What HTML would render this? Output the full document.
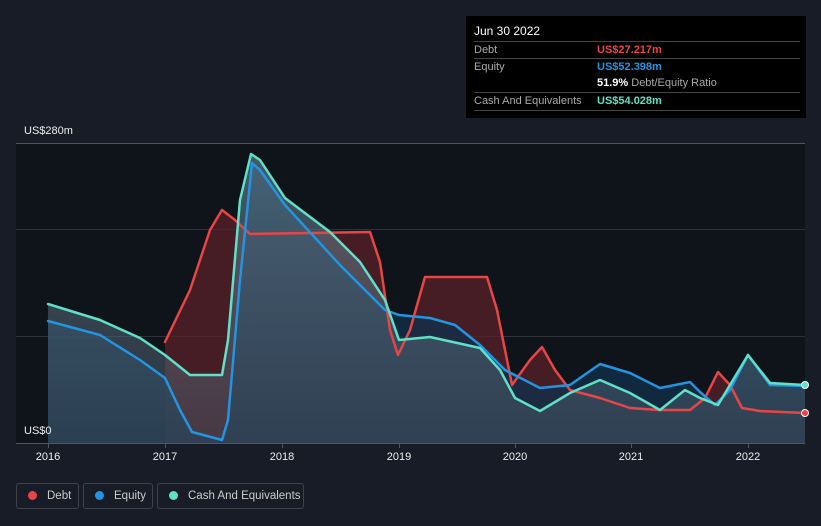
<!DOCTYPE html>
<html><head><style>
body{margin:0;width:821px;height:526px;background:#171c26;font-family:"Liberation Sans",sans-serif;overflow:hidden;position:relative}
.tt{position:absolute;left:466px;top:16px;width:340px;height:102px;background:#000;color:#fff;font-size:11px}
.row{position:absolute;left:8px;width:326px;border-top:1px solid #444;height:17px;line-height:17px}
.lbl{color:#aaa}
.v{position:absolute;left:123px;top:0;font-weight:bold}
.leg{position:absolute;top:483px;height:26px;border:1px solid #3d434d;border-radius:3px;color:#ccc;font-size:11.5px;line-height:24px;box-sizing:border-box;white-space:nowrap}
.dot{display:inline-block;width:9px;height:9px;border-radius:50%;margin:0 10px 0 11px;vertical-align:-1px}
.ax{position:absolute;color:#eee;font-size:11px;width:40px;text-align:center}
</style></head><body>
<svg width="821" height="526" style="position:absolute;left:0;top:0">
<defs>
<linearGradient id="cf" x1="0" x2="0" y1="0" y2="1"><stop offset="0" stop-color="#6a8a99" stop-opacity=".6"/><stop offset="1" stop-color="#4a5a6a" stop-opacity=".45"/></linearGradient>
</defs>
<rect x="16" y="143" width="789" height="300" fill="#0f131a"/>
<g stroke="#2c313a" stroke-width="1"><line x1="16" y1="143.5" x2="805" y2="143.5" stroke="#555"/><line x1="16" y1="229.5" x2="805" y2="229.5"/><line x1="16" y1="336.5" x2="805" y2="336.5"/></g>
<path d="M165,342 L190,290 L210,230 L222,210 L235,220 L250,234 L370,232 L380,262 L390,330 L398,355 L410,330 L425,277 L487,277 L497,310 L512,385 L530,360 L542,347 L555,370 L570,390 L600,398 L630,408 L660,410 L690,410 L705,398 L718,372 L730,385 L742,408 L760,411 L805,413 L805,443 L165,443Z" fill="#5a2228" fill-opacity=".75"/>
<path d="M48,321 L100,335 L140,360 L165,378 L180,410 L192,432 L222,440 L228,420 L240,280 L252,163 L260,170 L285,205 L340,265 L385,310 L399,315 L430,318 L455,325 L480,345 L505,370 L540,388 L570,385 L600,364 L630,373 L660,388 L690,382 L700,392 L715,405 L730,390 L748,355 L770,385 L805,386 L805,443 L48,443Z" fill="#123049" fill-opacity=".8"/>
<path d="M48,304 L100,320 L140,338 L165,355 L190,375 L222,375 L228,340 L240,200 L251,154 L260,160 L285,198 L330,232 L360,262 L385,300 L399,340 L430,337 L480,348 L500,370 L515,398 L540,411 L570,393 L600,380 L630,393 L660,410 L685,390 L700,398 L718,405 L748,355 L770,383 L805,385 L805,443 L48,443Z" fill="url(#cf)"/>
<g fill="none" stroke-width="2.5" stroke-linejoin="round" stroke-linecap="round">
<polyline stroke="#e84545" points="165,342 190,290 210,230 222,210 235,220 250,234 370,232 380,262 390,330 398,355 410,330 425,277 487,277 497,310 512,385 530,360 542,347 555,370 570,390 600,398 630,408 660,410 690,410 705,398 718,372 730,385 742,408 760,411 805,413"/>
<polyline stroke="#2394df" points="48,321 100,335 140,360 165,378 180,410 192,432 222,440 228,420 240,280 252,163 260,170 285,205 340,265 385,310 399,315 430,318 455,325 480,345 505,370 540,388 570,385 600,364 630,373 660,388 690,382 700,392 715,405 730,390 748,355 770,385 805,386"/>
<polyline stroke="#5fe0c8" points="48,304 100,320 140,338 165,355 190,375 222,375 228,340 240,200 251,154 260,160 285,198 330,232 360,262 385,300 399,340 430,337 480,348 500,370 515,398 540,411 570,393 600,380 630,393 660,410 685,390 700,398 718,405 748,355 770,383 805,385"/>
</g>
<circle cx="805" cy="413" r="3.5" fill="#e84545" stroke="#fff" stroke-width="1"/>
<circle cx="805" cy="385" r="3.5" fill="#5fe0c8" stroke="#fff" stroke-width="1"/>
<line x1="16" y1="443.5" x2="805" y2="443.5" stroke="#555"/>
<g stroke="#555"><line x1="48.5" y1="443" x2="48.5" y2="448"/><line x1="165.5" y1="443" x2="165.5" y2="448"/><line x1="282.5" y1="443" x2="282.5" y2="448"/><line x1="399.5" y1="443" x2="399.5" y2="448"/><line x1="515.5" y1="443" x2="515.5" y2="448"/><line x1="631.5" y1="443" x2="631.5" y2="448"/><line x1="748.5" y1="443" x2="748.5" y2="448"/></g>
</svg>
<div class="ax" style="left:24px;top:125px;width:auto">US$280m</div>
<div class="ax" style="left:24px;top:425px;width:auto">US$0</div>
<div class="ax" style="left:28px;top:451px">2016</div>
<div class="ax" style="left:145px;top:451px">2017</div>
<div class="ax" style="left:262px;top:451px">2018</div>
<div class="ax" style="left:379px;top:451px">2019</div>
<div class="ax" style="left:495px;top:451px">2020</div>
<div class="ax" style="left:611px;top:451px">2021</div>
<div class="ax" style="left:728px;top:451px">2022</div>
<div class="tt">
<div style="position:absolute;left:8px;top:8px;font-size:12px">Jun 30 2022</div>
<div class="row" style="top:25px"><span class="lbl">Debt</span><span class="v" style="color:#e84545">US$27.217m</span></div>
<div class="row" style="top:42px"><span class="lbl">Equity</span><span class="v" style="color:#2394df">US$52.398m</span></div>
<div class="row" style="top:59px;border-top:none"><span class="v" style="color:#fff">51.9% <span style="color:#aaa;font-weight:normal">Debt/Equity Ratio</span></span></div>
<div class="row" style="top:76px"><span class="lbl">Cash And Equivalents</span><span class="v" style="color:#5fe0c8">US$54.028m</span></div>
<div class="row" style="top:94px;height:0"></div>
</div>
<div class="leg" style="left:16px;width:63px"><span class="dot" style="background:#e84545"></span>Debt</div>
<div class="leg" style="left:83px;width:70px"><span class="dot" style="background:#2394df"></span>Equity</div>
<div class="leg" style="left:157px;width:147px"><span class="dot" style="background:#5fe0c8"></span>Cash And Equivalents</div>
</body></html>
